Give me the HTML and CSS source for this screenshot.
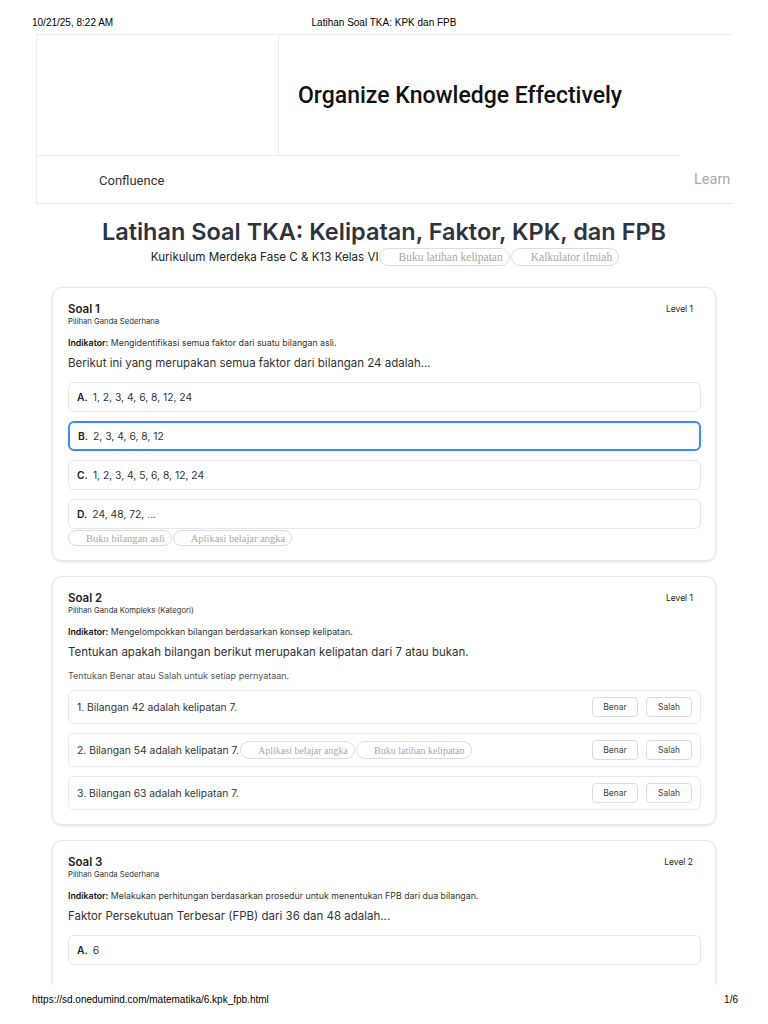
FILE: index.html
```html
<!DOCTYPE html>
<html lang="id">
<head>
    <meta charset="UTF-8">
    <meta name="viewport" content="width=device-width, initial-scale=1.0">
    <title>Latihan Soal TKA: KPK dan FPB</title>
    <link rel="stylesheet" href="styles.css">
</head>
<body>
    <div class="sheet">
        <div class="print-head">
            <span class="print-date">10/21/25, 8:22 AM</span>
            <span class="print-title">Latihan Soal TKA: KPK dan FPB</span>
        </div>

        <div class="content">
            <div class="ad">
                <div class="ad-top">
                    <div class="ad-logo"></div>
                    <div class="ad-headline">Organize Knowledge Effectively</div>
                </div>
                <div class="ad-nav">
                    <div class="ad-brand">Confluence</div>
                    <div class="ad-learn">Learn</div>
                </div>
            </div>

            <h1 class="page-title">Latihan Soal TKA: Kelipatan, Faktor, KPK, dan FPB</h1>
            <div class="subtitle">
                <span>Kurikulum Merdeka Fase C &amp; K13 Kelas VI</span>
                <span class="pill">Buku latihan kelipatan</span>
                <span class="pill">Kalkulator ilmiah</span>
            </div>

            <div class="card">
                <div class="card-head">
                    <div>
                        <div class="soal-num">Soal 1</div>
                        <div class="soal-type">Pilihan Ganda Sederhana</div>
                    </div>
                    <div class="level">Level 1</div>
                </div>
                <p class="indikator"><b>Indikator:</b> Mengidentifikasi semua faktor dari suatu bilangan asli.</p>
                <p class="question">Berikut ini yang merupakan semua faktor dari bilangan 24 adalah...</p>
                <div class="options">
                    <div class="option"><b>A.</b> 1, 2, 3, 4, 6, 8, 12, 24</div>
                    <div class="option option--selected"><b>B.</b> 2, 3, 4, 6, 8, 12</div>
                    <div class="option"><b>C.</b> 1, 2, 3, 4, 5, 6, 8, 12, 24</div>
                    <div class="option"><b>D.</b> 24, 48, 72, ...</div>
                </div>
                <div class="pills">
                    <span class="pill">Buku bilangan asli</span>
                    <span class="pill">Aplikasi belajar angka</span>
                </div>
            </div>

            <div class="card">
                <div class="card-head">
                    <div>
                        <div class="soal-num">Soal 2</div>
                        <div class="soal-type">Pilihan Ganda Kompleks (Kategori)</div>
                    </div>
                    <div class="level">Level 1</div>
                </div>
                <p class="indikator"><b>Indikator:</b> Mengelompokkan bilangan berdasarkan konsep kelipatan.</p>
                <p class="question">Tentukan apakah bilangan berikut merupakan kelipatan dari 7 atau bukan.</p>
                <p class="instruction">Tentukan Benar atau Salah untuk setiap pernyataan.</p>
                <div class="options">
                    <div class="statement">
                        <span>1. Bilangan 42 adalah kelipatan 7.</span>
                        <div class="choice">
                            <button class="btn">Benar</button>
                            <button class="btn">Salah</button>
                        </div>
                    </div>
                    <div class="statement">
                        <span>2. Bilangan 54 adalah kelipatan 7.</span>
                        <span class="pill">Aplikasi belajar angka</span>
                        <span class="pill">Buku latihan kelipatan</span>
                        <div class="choice">
                            <button class="btn">Benar</button>
                            <button class="btn">Salah</button>
                        </div>
                    </div>
                    <div class="statement">
                        <span>3. Bilangan 63 adalah kelipatan 7.</span>
                        <div class="choice">
                            <button class="btn">Benar</button>
                            <button class="btn">Salah</button>
                        </div>
                    </div>
                </div>
            </div>

            <div class="card card--cut">
                <div class="card-head">
                    <div>
                        <div class="soal-num">Soal 3</div>
                        <div class="soal-type">Pilihan Ganda Sederhana</div>
                    </div>
                    <div class="level">Level 2</div>
                </div>
                <p class="indikator"><b>Indikator:</b> Melakukan perhitungan berdasarkan prosedur untuk menentukan FPB dari dua bilangan.</p>
                <p class="question">Faktor Persekutuan Terbesar (FPB) dari 36 dan 48 adalah...</p>
                <div class="options">
                    <div class="option"><b>A.</b> 6</div>
                </div>
            </div>
        </div>

        <div class="print-foot">
            <span>https://sd.onedumind.com/matematika/6.kpk_fpb.html</span>
            <span>1/6</span>
        </div>
    </div>
</body>
</html>
```

FILE: styles.css
```css
* {
    box-sizing: border-box;
}

body {
    margin: 0;
    background-color: #fff;
    font-family: Inter, "Noto Sans", sans-serif;
    color: #333;
}

.sheet {
    display: flex;
    flex-direction: column;
    height: 1024px;
    overflow: hidden;
}

/* browser print header / footer */
.print-head,
.print-foot {
    display: flex;
    font-family: "Liberation Sans", Arial, sans-serif;
    font-size: 10px;
    line-height: 12px;
    color: #000;
    padding: 0 30px 0 32px;
}

.print-head {
    position: relative;
    height: 34px;
    padding-top: 17px;
}

.print-title {
    position: absolute;
    left: 0;
    right: 0;
    text-align: center;
}

.print-foot {
    justify-content: space-between;
    height: 39px;
    padding-top: 9px;
}

.content {
    flex: 1;
    min-height: 0;
    overflow: hidden;
}

/* ad block */
.ad {
    width: 696px;
    margin-left: 36px;
    border-top: 1px solid #ececec;
    border-left: 1px solid #ececec;
    border-bottom: 1px solid #e6e6e6;
    font-family: Roboto, sans-serif;
}

.ad-top {
    display: grid;
    grid-template-columns: 242px 1fr;
    height: 120px;
}

.ad-logo {
    border-right: 1px solid #ececec;
}

.ad-headline {
    display: flex;
    align-items: center;
    padding-left: 19px;
    font-size: 23px;
    font-weight: 500;
    color: #111;
}

.ad-nav {
    display: flex;
    height: 48px;
}

.ad-brand {
    flex: 1;
    display: flex;
    align-items: center;
    padding-left: 62px;
    padding-top: 1px;
    border-top: 1px solid #ececec;
    font-size: 13px;
    color: #333;
}

.ad-learn {
    width: 52px;
    display: flex;
    align-items: center;
    padding-left: 14px;
    padding-top: 1px;
    font-size: 14.5px;
    color: #a9a9a9;
    white-space: nowrap;
    overflow: hidden;
}

/* page title */
.page-title {
    margin: 13px 0 0;
    text-align: center;
    font-size: 23.5px;
    line-height: 30px;
    font-weight: 600;
    color: #2d3440;
}

.subtitle {
    display: flex;
    justify-content: center;
    align-items: center;
    margin: 1px 0 0;
    height: 18px;
    font-size: 11.6px;
    color: #222;
    padding-left: 2px;
}

.pill {
    display: inline-flex;
    align-items: center;
    height: 18px;
    padding: 0 6px 0 19px;
    border: 1px solid #dcdcdc;
    border-radius: 9px;
    font-family: "Liberation Serif", serif;
    font-size: 11.5px;
    color: #a8a8a8;
    white-space: nowrap;
}

.subtitle .pill + .pill,
.pills .pill + .pill {
    margin-left: 1px;
}

/* question cards */
.card {
    width: 664px;
    margin: 21px auto 0;
    padding: 13px 14px 14px 15px;
    background: #fff;
    border: 1px solid #e8e8e8;
    border-radius: 10px;
    box-shadow: 0 1px 3px rgba(0, 0, 0, 0.12);
}

.card + .card {
    margin-top: 15px;
}

/* last card runs on past the printed page */
.card--cut {
    padding-bottom: 60px;
}

.card-head {
    display: flex;
    justify-content: space-between;
    align-items: flex-start;
}

.soal-num {
    font-size: 11.5px;
    line-height: 16px;
    font-weight: 600;
    color: #222;
}

.soal-type {
    font-size: 7.7px;
    line-height: 10px;
    color: #333;
}

.level {
    font-size: 8.5px;
    line-height: 16px;
    padding-right: 8px;
    color: #222;
}

.indikator {
    margin: 10px 0 0;
    font-size: 8.8px;
    line-height: 12px;
    color: #333;
}

.indikator b {
    font-weight: 600;
    color: #111;
}

.question {
    margin: 6px 0 0;
    font-size: 11.5px;
    line-height: 16px;
    color: #333;
}

.instruction {
    margin: 10px 0 0;
    font-size: 9px;
    line-height: 12px;
    color: #555;
}

.options {
    display: flex;
    flex-direction: column;
    gap: 9px;
    margin-top: 11px;
}

.instruction + .options {
    margin-top: 8px;
}

.option {
    display: flex;
    align-items: center;
    gap: 5px;
    height: 30px;
    padding: 0 8px;
    border: 1.5px solid #e5e6e8;
    border-radius: 6px;
    font-size: 10.3px;
    color: #333;
}

.option b {
    font-weight: 600;
    color: #222;
}

.option--selected {
    border: 2px solid #3a8cf5;
}

.pills {
    display: flex;
    margin-top: 1px;
}

.pills .pill {
    height: 16px;
    padding: 0 6px 0 17px;
    font-size: 10.5px;
}

.statement {
    display: flex;
    align-items: center;
    height: 34px;
    padding: 0 8px;
    border: 1px solid #e8e9eb;
    border-radius: 6px;
    font-size: 10.3px;
    color: #333;
}

.statement .pill {
    margin-left: 1px;
    padding-left: 17px;
    font-size: 10px;
}

.choice {
    display: flex;
    gap: 8px;
    margin-left: auto;
}

.btn {
    height: 20px;
    width: 46px;
    padding: 0;
    border: 1px solid #dcdcdc;
    border-radius: 4px;
    background: #fff;
    font-family: Inter, sans-serif;
    font-size: 8.5px;
    color: #444;
}
```
